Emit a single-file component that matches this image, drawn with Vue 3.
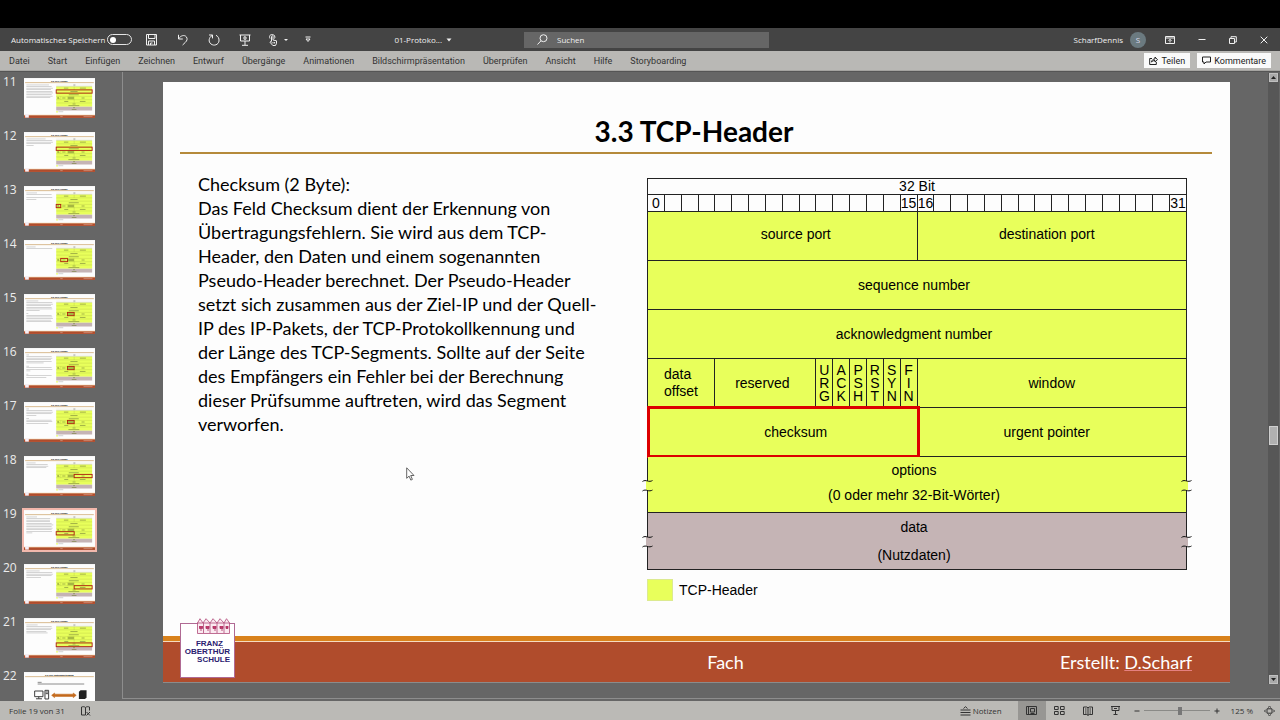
<script setup>
import { ref } from 'vue'

const tabs = ['Datei', 'Start', 'Einfügen', 'Zeichnen', 'Entwurf', 'Übergänge', 'Animationen', 'Bildschirmpräsentation', 'Überprüfen', 'Ansicht', 'Hilfe', 'Storyboarding']
const autoSave = ref(false)
const zoom = ref(56)
const current = ref(19)

// Thumbnails share the slide's own 1067 x 600 coordinate space.
const slides = [
  { n: 11, box: [484, 178, 540, 49], lines: [340, 380, 400, 370, 390, 400, 380, 395, 360] },
  { n: 12, box: [484, 227, 540, 49], lines: [290, 390, 400, 370, 110] },
  { n: 13, box: [484, 276, 68, 49], lines: [160, 380, 0, 390, 150] },
  { n: 14, box: [552, 276, 101, 49], lines: [140, 390] },
  { n: 15, box: [653, 276, 101, 49], lines: [180, 390, 400, 370, 380, 390, 200, 0, 30, 380, 390, 400, 370, 380] },
  { n: 16, box: [653, 276, 101, 49], lines: [40, 380, 390, 370, 380, 260, 0, 40, 380, 390, 60, 0, 30, 380, 300] },
  { n: 17, box: [653, 276, 101, 49], lines: [40, 390, 400, 380, 150, 0, 40, 380, 390, 330] },
  { n: 18, box: [754, 276, 270, 49], lines: [140, 320, 330, 300] },
  { n: 19, box: [484, 325, 270, 49], lines: [160, 360, 355, 355, 380, 405, 380, 395, 380, 385, 90] },
  { n: 20, box: [754, 325, 270, 49], lines: [200, 390, 400, 380, 220] },
  { n: 21, box: [484, 374, 540, 56], lines: [170, 380, 390, 370, 300, 320] },
  { n: 22 }
]
const flags = ['URG', 'ACK', 'PSH', 'RST', 'SYN', 'FIN']
const bits = Array.from({ length: 32 }, (_, i) => ([0, 15, 16, 31].includes(i) ? String(i) : ''))
const explanation = `Checksum (2 Byte):
Das Feld Checksum dient der Erkennung von
Übertragungsfehlern. Sie wird aus dem TCP-
Header, den Daten und einem sogenannten
Pseudo-Header berechnet. Der Pseudo-Header
setzt sich zusammen aus der Ziel-IP und der Quell-
IP des IP-Pakets, der TCP-Protokollkennung und
der Länge des TCP-Segments. Sollte auf der Seite
des Empfängers ein Fehler bei der Berechnung
dieser Prüfsumme auftreten, wird das Segment
verworfen.`
</script>

<template>
  <div class="window">
    <header class="titlebar">
      <div class="title-left">
        <label class="autosave">
          <span>Automatisches Speichern</span>
          <input v-model="autoSave" type="checkbox" role="switch" />
        </label>
        <div class="quick">
          <button type="button" aria-label="Speichern">
            <svg width="12" height="12" viewBox="0 0 12 12"><path d="M.5 .5h10v10.500h-10zM2.500 .5v4h6.500v-4M2.500 11V7h6v4M4.500 11V9h2" /></svg>
          </button>
          <button type="button" aria-label="Rückgängig">
            <svg width="12" height="12" viewBox="0 0 12 12"><path d="M1.500 .8v4.200h4.300M1.700 4.800C3.500 1.500 7.500 .5 9.300 2.800c1.500 2 .7 4-1 5.600L5.600 11" /></svg>
          </button>
          <button type="button" aria-label="Wiederholen">
            <svg width="12" height="12" viewBox="0 0 12 12"><path d="M1 1h3.500v3.400M4.300 1.300C.5 3.500 .2 8 3 10c3 2.300 7.500 .8 8-3C11.300 4.200 10 2.200 8 1.300" /></svg>
          </button>
          <button type="button" aria-label="Von Beginn an">
            <svg width="12" height="12" viewBox="0 0 12 12"><path d="M.5 1h11M1.500 1v6h9V1M6 7v4M3 11.300h6M5 2.800v2.400h2V3z" /></svg>
          </button>
          <button type="button" class="touch" aria-label="Fingereingabe-/Mausmodus">
            <svg width="12" height="12" viewBox="0 0 12 12"><path d="M3.500 7.500V2.500c0-1.200 1.500-1.200 1.500 0V6l3.500 .8v2.500L7.500 11.500H4.800L2 8.200l.6-.8 1 .8M2 4.500C.5 1.500 3 .2 4.500 .5 6.500 .7 7.500 3 6.500 4.500M5 8v1.500M6.600 8v1.500" /></svg>
            <svg width="6" height="4" viewBox="0 0 6 4"><path class="solid" d="M1 1h4L3 3z" /></svg>
          </button>
          <button type="button" aria-label="Symbolleiste anpassen">
            <svg width="6" height="7" viewBox="0 0 6 7"><path d="M.5 1h5M1 3h4L3 5.500z" /></svg>
          </button>
        </div>
        <button type="button" class="doc">01-Protoko...
          <svg width="6" height="4" viewBox="0 0 6 4"><path class="solid" d="M.5 .5h5L3 3.500z" /></svg>
        </button>
      </div>
      <label class="search">
        <svg width="11" height="11" viewBox="0 0 11 11"><circle cx="6.500" cy="4.200" r="3.500" /><path d="M4 6.800.5 10.500" /></svg>
        <input type="search" placeholder="Suchen" aria-label="Suchen" />
      </label>
      <div class="title-right">
        <span class="user">ScharfDennis</span>
        <span class="avatar">S</span>
        <button type="button" aria-label="Menüband-Anzeigeoptionen">
          <svg width="10" height="8" viewBox="0 0 10 8"><path d="M.5 .5h9v7h-9zM.5 2h9M5 6.500V3.500M3.500 4.800 5 3.300l1.500 1.500" /></svg>
        </button>
        <button type="button" aria-label="Minimieren">
          <svg width="8" height="8" viewBox="0 0 8 8"><path d="M.5 3.500h7" /></svg>
        </button>
        <button type="button" aria-label="Verkleinern">
          <svg width="8" height="8" viewBox="0 0 8 8"><path d="M.5 2.500h5v5h-5zM2 2.500V.7h5.300V6H5.500" /></svg>
        </button>
        <button type="button" aria-label="Schließen">
          <svg width="8" height="8" viewBox="0 0 8 8"><path d="M.7 .7l6.600 6.600M7.300 .7.7 7.300" /></svg>
        </button>
      </div>
    </header>

    <div class="ribbon">
      <nav class="tabs">
        <button v-for="t in tabs" :key="t" type="button">{{ t }}</button>
      </nav>
      <div class="actions">
        <button type="button">
          <svg width="9" height="9" viewBox="0 0 9 9"><path d="M3 2.500H.7v6h6.600V6M2.500 6C3 3.800 4.200 3 6 3V1l2.500 2.700L6 6V4.500C4.500 4.500 3.500 5 2.500 6z" /></svg>
          Teilen
        </button>
        <button type="button">
          <svg width="9" height="9" viewBox="0 0 9 9"><path d="M.5 1h8v5H4L2 8V6H.5z" /></svg>
          Kommentare
        </button>
      </div>
    </div>

    <main class="body">
      <aside class="thumbs">
        <button v-for="s in slides" :key="s.n" type="button" class="thumb" :class="{ selected: s.n === current }" :aria-label="`Folie ${s.n}`" @click="current = s.n">
          <span class="num">{{ s.n }}</span>
          <svg class="mini" viewBox="0 0 1067 600" aria-hidden="true">
            <rect width="1067" height="600" fill="#fdfdfd" />
            <rect x="17" y="66" width="1032" height="10" fill="#c79a5a" />
            <template v-if="s.box">
              <text x="531" y="62" text-anchor="middle" class="mini-title">3.3 TCP-Header</text>
              <rect v-for="(w, i) in s.lines" :key="i" x="35" :y="100 + i * 24" :width="w" height="8" fill="#b0b0b0" />
              <rect x="484" y="96" width="540" height="34" fill="#f4f4ee" />
              <rect x="742" y="100" width="30" height="10" fill="#777" />
              <rect x="484" y="129" width="540" height="302" fill="#e8ff5b" />
              <rect x="484" y="431" width="540" height="57" fill="#c5b4b5" />
              <path d="M484 129h540M484 178h540M484 227h540M484 276h540M484 325h540M484 374h540M552 276v49M653 276v49M754 276v49M754 129v49M754 325v49" stroke="#8d9a3a" stroke-width="3" />
              <path d="M600 152h66M840 152h90M697 203h108M673 251h150M575 300h48M865 300h45M605 352h60M840 352h84M730 390h44M667 414h164M738 445h28M718 473h70" stroke="#75803a" stroke-width="9" />
              <path d="M660 288h90M660 300h90M660 312h90M500 292h26M500 308h32" stroke="#606a2a" stroke-width="7" />
              <rect x="484" y="498" width="25" height="20" fill="#e8ff5b" />
              <rect x="516" y="504" width="74" height="8" fill="#aaa" />
              <rect :x="s.box[0]" :y="s.box[1]" :width="s.box[2]" :height="s.box[3]" fill="none" stroke="#b0240e" stroke-width="14" />
              <rect y="554" width="1067" height="8" fill="#d9821c" />
              <rect y="562" width="1067" height="38" fill="#b04c2c" />
              <rect x="17" y="541" width="55" height="54" fill="#f5eef5" />
              <path d="M545 580h36M895 580h134" stroke="#e3b9a9" stroke-width="8" />
            </template>
            <template v-else>
              <text x="531" y="62" text-anchor="middle" class="mini-title">3.3 TCP-Datenübertragung</text>
              <path d="M205 155h60M205 180h700" stroke="#555" stroke-width="10" />
              <path d="M160 285h125v85H160zM222 370v30M180 402h90M315 275h55v130h-55zM325 300h35M325 325h35" fill="none" stroke="#333" stroke-width="14" />
              <path d="M415 350l45-35v18h280v-18l45 35-45 35v-18H460v18z" fill="#c46a1c" stroke="#c46a1c" stroke-width="8" />
              <path d="M825 295l25-20h90v110l-25 20h-90z" fill="#222" />
            </template>
          </svg>
        </button>
      </aside>

      <section class="stage">
        <article class="slide">
          <h1>3.3 TCP-Header</h1>
          <div class="content">
            <p class="text">{{ explanation }}</p>
            <figure>
              <table>
                <colgroup><col v-for="i in 32" :key="i" /></colgroup>
                <tbody>
                  <tr class="r-head"><td colspan="32">32 Bit</td></tr>
                  <tr class="r-bits"><td v-for="(b, i) in bits" :key="i">{{ b }}</td></tr>
                  <tr class="r-field">
                    <td colspan="16" class="left-half raised">source port</td>
                    <td colspan="16" class="right-half raised">destination port</td>
                  </tr>
                  <tr class="r-field"><td colspan="32" class="wide">sequence number</td></tr>
                  <tr class="r-field"><td colspan="32" class="wide">acknowledgment number</td></tr>
                  <tr class="r-field">
                    <td colspan="4" class="offset">data<br />offset</td>
                    <td colspan="6" class="wide">reserved</td>
                    <td v-for="f in flags" :key="f" class="flag"><span v-for="c in f" :key="c">{{ c }}</span></td>
                    <td colspan="16">window</td>
                  </tr>
                  <tr class="r-field">
                    <td colspan="16" class="left-half marked">checksum</td>
                    <td colspan="16" class="right-half">urgent pointer</td>
                  </tr>
                  <tr class="r-options">
                    <td colspan="32" class="wide torn">options<br />(0 oder mehr 32-Bit-Wörter)
                      <svg v-for="side in ['l', 'r']" :key="side" class="tear" :class="side" width="11" height="14" viewBox="0 0 11 14"><rect x="4" y="2" width="3" height="9" fill="#e8ff5b" /><path d="M.5 2.500C2 1.200 4 1.500 5.500 2S9 2.500 10.500 1.500M.5 12C2 10.700 4 11 5.500 11.500S9 12 10.500 11" /></svg>
                    </td>
                  </tr>
                  <tr class="r-data">
                    <td colspan="32" class="wide torn">data<br />(Nutzdaten)
                      <svg v-for="side in ['l', 'r']" :key="side" class="tear" :class="side" width="11" height="14" viewBox="0 0 11 14"><rect x="4" y="2" width="3" height="9" fill="#c5b4b5" /><path d="M.5 2.500C2 1.200 4 1.500 5.500 2S9 2.500 10.500 1.500M.5 12C2 10.700 4 11 5.500 11.500S9 12 10.500 11" /></svg>
                    </td>
                  </tr>
                </tbody>
              </table>
              <figcaption><i></i>TCP-Header</figcaption>
            </figure>
          </div>
          <footer class="band">
            <div class="logo">
              <svg width="35" height="16" viewBox="0 0 35 16">
                <path d="M1.500 15.500V5L4 .7 7 5l3-4.300L14 5l3-4.300L21 5l3-4.300L28 5l2.500-4.300L33.500 5v10.500zM1 5h33M7.500 5v10M14 5v10M21 5v10M28 5v10" fill="#fbeaf1" stroke="#b04a78" stroke-width=".8" />
                <path d="M3.500 8v2.500h3V8M10 8v2.500h3V8M17 8v2.500h3V8M24 8v2.500h3V8M30 8v2.500h2V8M4 12h2M11 12h2M18 12h2M25 12h2" fill="#c03a6c" stroke="#a82e60" stroke-width=".8" />
              </svg>
              <b class="franz">FRANZ</b><b>OBERTHÜR</b><b>SCHULE</b>
            </div>
            <span class="subject">Fach</span>
            <span class="author">Erstellt: <u>D.Scharf</u></span>
          </footer>
          <svg class="cursor" width="9" height="14" viewBox="0 0 9 14"><path d="M.7 .8v10.500l2.400-2.200 1.700 4 1.600-.7-1.700-3.900H8z" fill="#fff" stroke="#555" stroke-width=".9" /></svg>
        </article>
        <div class="scroll">
          <button type="button" aria-label="Nach oben"><svg width="5" height="3" viewBox="0 0 5 3"><path d="M0 3h5L2.500 0z" /></svg></button>
          <div class="track"><div class="handle"></div></div>
          <button type="button" aria-label="Nach unten"><svg width="5" height="3" viewBox="0 0 5 3"><path d="M0 0h5L2.500 3z" /></svg></button>
        </div>
      </section>
    </main>

    <footer class="status">
      <span class="page">Folie 19 von 31</span>
      <svg width="10" height="10" viewBox="0 0 10 10"><path d="M4.500 9H.5V1C2 .5 3.500 .5 4.500 1.500V9M4.500 1.500C5.500 .5 7 .5 8.500 1v3.500M5.500 6l3.500 3.500M9 6 5.500 9.500" /></svg>
      <div class="views">
        <button type="button" class="notes">
          <svg width="11" height="10" viewBox="0 0 11 10"><path d="M.5 4h10M.5 6.500h10M.5 9h10M3.500 2.500 5.500 .7l2 1.800" /></svg>Notizen
        </button>
        <button type="button" class="view on" aria-label="Normal">
          <svg width="11" height="9" viewBox="0 0 11 9"><path d="M.5 .5h10v8H.5zM2.500 .5v8M4.500 2.500h4v3.500h-4zM4.500 7.500h4" /></svg>
        </button>
        <button type="button" class="view" aria-label="Foliensortierung">
          <svg width="11" height="9" viewBox="0 0 11 9"><path d="M.5 .5h3.700v3H.5zM6.500 .5h3.700v3H6.500zM.5 5.500h3.700v3H.5zM6.500 5.500h3.700v3H6.500z" /></svg>
        </button>
        <button type="button" class="view" aria-label="Leseansicht">
          <svg width="10" height="10" viewBox="0 0 10 10"><path d="M5 1.500v8M.5 1h3.300L5 1.800 6.200 1h3.300v7.500H6.200L5 9.300l-1.200-.8H.5zM2 3h1.500M2 5h1.500M2 7h1.500M6.500 3H8M6.500 5H8M6.500 7H8" /></svg>
        </button>
        <button type="button" class="view" aria-label="Bildschirmpräsentation">
          <svg width="9" height="9" viewBox="0 0 9 9"><path d="M0 .5h9M1 .5v4h7v-4M4.500 4.500v4M2.500 8.500h4M3 2.500h3" /></svg>
        </button>
        <button type="button" class="step" aria-label="Verkleinern"><svg width="6" height="6" viewBox="0 0 6 6"><path d="M.5 3h5" /></svg></button>
        <input v-model="zoom" type="range" min="0" max="100" aria-label="Zoom" />
        <button type="button" class="step" aria-label="Vergrößern"><svg width="6" height="6" viewBox="0 0 6 6"><path d="M.5 3h5M3 .5v5" /></svg></button>
        <span class="percent">125 %</span>
        <button type="button" class="fit" aria-label="An Fenster anpassen">
          <svg width="11" height="10" viewBox="0 0 11 10"><path d="M3 2.800h5v4.400H3zM4 1.500 5.500 .3 7 1.500M4 8.500l1.500 1.200L7 8.500M1.700 3.700.5 5l1.200 1.300M9.300 3.700 10.500 5 9.300 6.300" /></svg>
        </button>
      </div>
    </footer>
  </div>
</template>

<style>
html, body { background: #000; }
</style>

<style scoped>
* { box-sizing: border-box; }
button { border: 0; padding: 0; margin: 0; background: none; color: inherit; font: inherit; display: inline-flex; align-items: center; justify-content: center; white-space: nowrap; }
svg { display: block; flex: none; fill: none; stroke: currentColor; stroke-width: 1; }
.solid { fill: currentColor; stroke: none; }
.window { height: 100vh; padding-top: 28px; display: flex; flex-direction: column; overflow: hidden; font-family: "Open Sans", "Noto Sans", sans-serif; font-size: 8px; line-height: 12px; background: #000; }

.titlebar { flex: none; height: 23px; background: #444; color: #f0f0f0; display: grid; grid-template-columns: 524fr 245fr 511fr; align-items: center; }
.title-left { display: flex; align-items: center; padding: 0 72px 0 11px; white-space: nowrap; }
.autosave { flex: none; display: flex; align-items: center; justify-content: space-between; width: 121px; }
.autosave input { appearance: none; flex: none; width: 25px; height: 11px; margin: 0; border: 1px solid #e4e4e4; border-radius: 6px; display: flex; align-items: center; padding-left: 2px; }
.autosave input::before { content: ""; width: 6px; height: 6px; border-radius: 50%; background: #fff; }
.quick { display: flex; align-items: center; gap: 19px; margin-left: 14px; }
.touch { gap: 3px; margin-left: -2px; }
.quick button:last-child { margin-left: -3px; }
.doc { margin-left: auto; gap: 4px; }
.search { height: 16px; background: #666; display: flex; align-items: center; gap: 9px; padding-left: 13px; }
.search input { flex: 1; min-width: 0; border: 0; padding: 0; background: none; color: #eee; font: inherit; outline: none; }
.search input::placeholder { color: #eee; }
.title-right { display: flex; align-items: center; justify-content: flex-end; gap: 23px; padding-right: 12px; }
.user { margin-right: -16px; }
.avatar { width: 16px; height: 16px; border-radius: 50%; background: #6b7a80; color: #dde; display: grid; place-items: center; margin-right: -4px; }

.ribbon { flex: none; height: 20px; background: #b9b8b5; color: #333; display: flex; align-items: center; justify-content: space-between; padding: 0 9px; border-bottom: 1px solid #a5a4a1; font: 9px/12px Roboto, "Noto Sans", sans-serif; }
.tabs { display: flex; gap: 18px; }
.actions { display: flex; gap: 7px; }
.actions button { height: 15px; padding: 0 5px; gap: 3px; background: #fafafa; color: #222; }

.body { flex: 1; min-height: 0; display: flex; background: #666; border-top: 1px solid #555; }
.thumbs { flex: none; width: 122px; overflow: hidden; padding-top: 4px; display: flex; flex-direction: column; gap: 10px; }
.thumb { flex: none; display: grid; grid-template-columns: 20px 75px; column-gap: 2px; align-items: start; justify-content: start; height: 44px; }
.num { font: 12px/12px "Open Sans", "Noto Sans", sans-serif; color: #ececec; text-align: left; padding-left: 3px; }
.mini { width: 75px; height: 44px; padding: 2px; border: 0 solid #f2b8ac; stroke: none; }
.selected .mini { border-width: 2px; padding: 0; background: #c6553f; }
.mini-title { font: bold 36px Lato, sans-serif; fill: #000; }

.stage { flex: 1; min-width: 0; margin-bottom: 2px; border-left: 1px solid #8d8d8d; border-bottom: 1px solid #8d8d8d; display: flex; }
.slide { position: relative; flex: 1; min-width: 0; margin: 10px 38px 16px 40px; background: #fdfdfd; color: #000; display: flex; flex-direction: column; box-shadow: 0 1px 0 #8b8b8b; }
h1 { margin: 0 18px 0 17px; padding: 31px 4px 3px 0; border-bottom: 2px solid #b58a3a; font: bold 28px/36px Lato, Carlito, sans-serif; text-align: center; }
.content { flex: 1; display: grid; grid-template-columns: 449fr 540fr; padding: 18px 43px 0 35px; align-items: start; }
.text { margin: 0; font: 18px/24px Lato, Carlito, sans-serif; white-space: pre-line; }
figure { margin: 6px 0 0; font-family: "Liberation Sans", Arial, sans-serif; font-size: 14px; line-height: 17px; }
table { width: 100%; table-layout: fixed; border-collapse: collapse; }
td { border: 1px solid #222; padding: 0; text-align: center; vertical-align: middle; white-space: nowrap; background: #e8ff5b; }
.r-head td, .r-bits td { background: #fdfdfd; line-height: 15px; }
.r-head { height: 16px; }
.r-bits { height: 17px; }
.r-field { height: 49px; }
.r-options { height: 56px; line-height: 25px; }
.r-data { height: 57px; line-height: 28px; }
.r-data td { background: #c5b4b5; }
.r-options td { padding-bottom: 4px; }
.left-half { padding-left: 27px; }
.right-half { padding-right: 10px; }
.raised { padding-bottom: 3px; }
.wide { padding-right: 6px; }
.offset { text-align: left; padding-left: 16px; }
.flag { line-height: 13px; }
.flag span { display: block; }
.marked, .torn { position: relative; }
.marked::after { content: ""; position: absolute; inset: -2px -3px -2px -1px; border: 3px solid #dc0000; }
.tear { position: absolute; top: 22px; stroke: #111; }
.tear rect { stroke: none; }
.l { left: -6px; }
.r { right: -6px; }
figcaption { display: flex; align-items: center; gap: 6px; margin-top: 9px; }
figcaption i { width: 26px; height: 22px; background: #e8ff5b; border: 1px solid #dcea90; }

.band { position: relative; display: grid; grid-template-columns: 1fr auto 1fr; align-items: center; height: 46px; padding: 0 38px 0 96px; border-top: 5px solid #d9821c; background: #b04c2c; box-shadow: inset 0 1px 0 #f6dcc0; color: #fff; font: 18px/24px Lato, Carlito, sans-serif; }
.subject { grid-column: 2; }
.author { text-align: right; }
.author u { text-decoration-color: #e58080; text-decoration-thickness: 1px; }
.logo { position: absolute; left: 17px; bottom: 4px; width: 55px; height: 55px; padding: 16px 4px 0 0; border: 1px solid #b06a94; background: #fff; color: #2a2070; display: flex; flex-direction: column; align-items: flex-end; font: bold 8px/8px "Liberation Sans", Arial, sans-serif; }
.logo svg { position: absolute; top: -6px; right: 3px; }
.franz { margin-right: 7px; }
.cursor { position: absolute; left: 243px; top: 385px; }

.scroll { flex: none; width: 11px; margin: 1px 1px 14px 0; display: flex; flex-direction: column; align-items: center; background: #575757; }
.scroll button { width: 9px; height: 9px; background: #a9a9a9; border: 1px solid #c0c0c0; }
.scroll svg { fill: #222; stroke: none; }
.track { flex: 1; width: 9px; padding-top: 344px; }
.handle { height: 19px; background: #b0b0b0; border: 1px solid #cfcfcf; }

.status { flex: none; height: 19px; background: #bbbab6; color: #333; display: flex; align-items: center; padding: 0 5px 0 9px; }
.page { width: 72px; }
.views { margin-left: auto; display: flex; align-items: center; align-self: stretch; }
.notes { gap: 2px; margin-right: 16px; }
.view { width: 28px; height: 19px; }
.on { background: #979693; }
.step { width: 14px; height: 12px; }
.views input { appearance: none; width: 66px; height: 8px; margin: 0; background: linear-gradient(#8a8a87, #8a8a87) center / 100% 1px no-repeat; }
.views input::-webkit-slider-thumb { appearance: none; width: 4px; height: 8px; background: #777; }
.percent { margin: 0 11px 0 7px; white-space: nowrap; }
</style>
